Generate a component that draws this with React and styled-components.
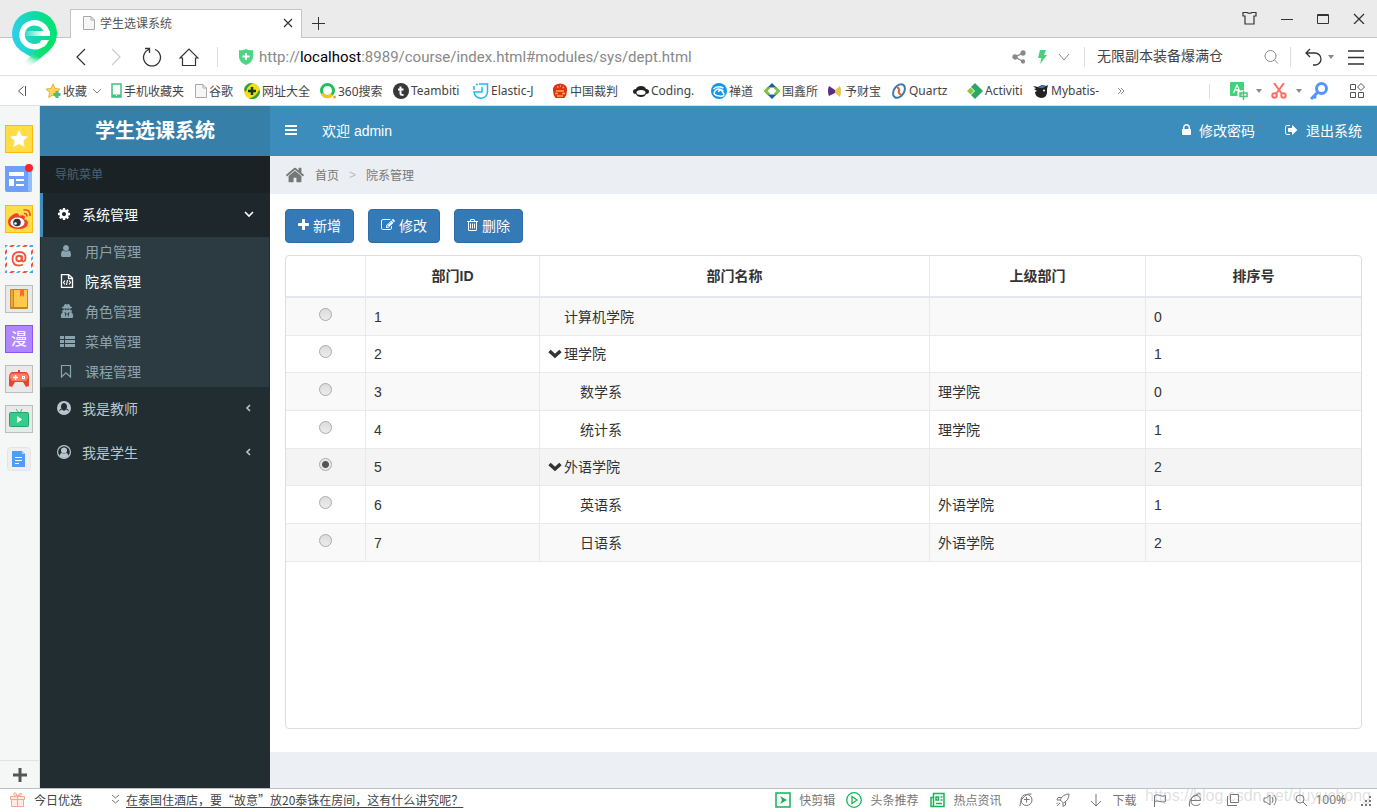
import React, { useState } from 'react';
import styled, { createGlobalStyle } from 'styled-components';
import { FaUserSecret } from 'react-icons/fa';

const GlobalStyle = createGlobalStyle`
  * {
    box-sizing: border-box;
  }
  body {
    margin: 0;
    background: #fff;
    color: #333;
    font-family: 'Liberation Sans', 'Noto Sans CJK SC', sans-serif;
    font-size: 14px;
  }
  button, input {
    font-family: inherit;
  }
  a {
    color: inherit;
    text-decoration: none;
  }
  svg {
    display: block;
    flex: none;
  }
`;

const Page = styled.div`
  display: flex;
  flex-direction: column;
  height: 100vh;
  overflow: hidden;
`;

/* ---------- browser window ---------- */

const Chrome = styled.header`
  position: relative;
  font-family: 'Noto Sans', 'Noto Sans CJK SC', sans-serif;
  font-size: 12px;
  color: #444;
`;

const BrowserLogo = styled.div`
  position: absolute;
  top: 10px;
  left: 11px;
`;

const TabBar = styled.div`
  display: flex;
  align-items: flex-end;
  height: 38px;
  padding-left: 70px;
  background: #ebebeb;
  border-bottom: 1px solid #c6c6c6;
`;

const Tab = styled.div`
  display: flex;
  align-items: center;
  gap: 5px;
  width: 232px;
  height: 29px;
  margin-bottom: -1px;
  padding: 0 8px 2px 12px;
  background: #fff;
  border: 1px solid #c6c6c6;
  border-bottom: none;
  color: #555;
`;

const TabTitle = styled.span`
  flex: 1;
`;

const IconButton = styled.button`
  display: flex;
  flex: none;
  align-items: center;
  justify-content: center;
  width: ${(props) => props.$w || 36}px;
  height: ${(props) => props.$h || 28}px;
  margin-left: ${(props) => props.$ml || 0}px;
  padding: 0;
  border: none;
  background: transparent;
  color: ${(props) => props.$color || '#333'};
  cursor: pointer;
`;

const WindowButtons = styled.div`
  display: flex;
  align-self: flex-start;
  margin-left: auto;
  padding-top: 5px;
`;

const AddressBar = styled.div`
  display: flex;
  align-items: center;
  height: 38px;
  padding-left: 63px;
  border-bottom: 1px solid #e0e0e0;
`;

const Divider = styled.span`
  flex: none;
  width: 1px;
  height: ${(props) => props.$h || 20}px;
  margin-left: ${(props) => props.$ml || 0}px;
  background: #ddd;
`;

const Url = styled.div`
  flex: 1;
  margin-left: 6px;
  outline: none;
  color: #888;
  font-family: Roboto, 'Noto Sans', sans-serif;
  font-size: 15px;
  line-height: 20px;
  white-space: nowrap;

  b {
    font-weight: 400;
    color: #000;
  }
`;

const SearchInput = styled.input`
  width: 167px;
  padding: 0 0 3px 12px;
  border: none;
  outline: none;
  background: transparent;
  color: #444;
  font-size: 14px;
`;

const BookmarkBar = styled.nav`
  display: flex;
  align-items: center;
  height: 30px;
  border-bottom: 1px solid #e0e0e0;
`;

const Bookmark = styled.a`
  display: flex;
  flex: none;
  align-items: center;
  gap: 2px;
  width: ${(props) => props.$w}px;
  color: #444;
  white-space: nowrap;
`;

const BookmarkTools = styled.div`
  display: flex;
  align-items: center;
  gap: 4px;
  margin-left: auto;
`;

const StatusTools = styled.div`
  display: flex;
  align-items: center;
  margin: 0 4px 0 auto;
`;

const Body = styled.div`
  display: flex;
  flex: 1;
  min-height: 0;
`;

const Rail = styled.aside`
  display: flex;
  flex: none;
  flex-direction: column;
  width: 40px;
  background: #f5f7f7;
  border-right: 1px solid #dde2e2;
`;

const RailList = styled.div`
  display: flex;
  flex: 1;
  flex-direction: column;
  gap: 12px;
  padding: 19px 0 0 5px;
`;

const RailAdd = styled.div`
  display: flex;
  justify-content: center;
  border-top: 1px solid #dfe3e8;
`;

const StatusBar = styled.footer`
  position: relative;
  display: flex;
  flex: none;
  align-items: center;
  height: 24px;
  padding-bottom: 2px;
  border-top: 1px solid #c0c0c0;
  background: #fff;
  color: #777;
  font-family: 'Noto Sans', 'Noto Sans CJK SC', sans-serif;
  font-size: 12px;
  white-space: nowrap;
`;

const StatusItem = styled.a`
  display: flex;
  align-items: center;
  gap: ${(props) => props.$gap || 8}px;
  margin-left: ${(props) => props.$ml || 0}px;
  color: ${(props) => props.$color || '#777'};
`;

const Headline = styled.a`
  margin-left: 6px;
  color: #444;
  font-family: 'Noto Sans CJK SC', sans-serif;
  text-decoration: underline;
  text-underline-offset: 2px;
`;

const Watermark = styled.span`
  position: absolute;
  right: 6px;
  bottom: 6px;
  color: rgba(150, 150, 150, 0.3);
  font-family: 'Liberation Sans', sans-serif;
  font-size: 16px;
  line-height: 20px;
  pointer-events: none;
`;

/* ---------- admin page ---------- */

const Sidebar = styled.aside`
  flex: none;
  width: 230px;
  background: #222d32;
`;

const Brand = styled.h1`
  margin: 0;
  height: 50px;
  background: #367fa9;
  color: #fff;
  font-size: 20px;
  line-height: 51px;
  text-align: center;
`;

const MenuHeader = styled.div`
  height: 37px;
  padding-left: 15px;
  background: #1a2226;
  color: #4b646f;
  font-size: 12px;
  line-height: 38px;
`;

const MenuItem = styled.a`
  display: flex;
  align-items: center;
  gap: 10px;
  height: 44px;
  padding: 0 16px 2px 13px;
  border-left: 3px solid ${(props) => (props.$active ? '#3c8dbc' : 'transparent')};
  background: ${(props) => (props.$active ? '#1e282c' : 'transparent')};
  color: ${(props) => (props.$active ? '#fff' : '#b8c7ce')};
`;

const MenuIcon = styled.span`
  display: flex;
  justify-content: center;
  width: 16px;
`;

const MenuLabel = styled.span`
  flex: 1;
`;

const SubMenu = styled.div`
  margin: 0 1px;
  background: #2c3b41;
`;

const SubItem = styled.a`
  display: flex;
  align-items: center;
  gap: 10px;
  height: 30px;
  padding: 0 0 2px 18px;
  color: ${(props) => (props.$active ? '#fff' : '#8aa4af')};
`;

const Main = styled.main`
  display: flex;
  flex: 1;
  flex-direction: column;
  min-width: 0;
  background: #ecf0f5;
`;

const Navbar = styled.nav`
  display: flex;
  align-items: center;
  height: 50px;
  padding: 0 15px 2px;
  background: #3c8dbc;
  color: #fff;
`;

const Welcome = styled.span`
  flex: 1;
  margin-left: 25px;
`;

const NavLink = styled.a`
  display: flex;
  align-items: center;
  gap: 8px;
  margin-left: 30px;
`;

const Breadcrumb = styled.div`
  display: flex;
  align-items: center;
  gap: 10px;
  height: 38px;
  padding: 0 0 1px 15px;
  background: #ebeef3;
  color: #777;
  font-size: 12px;
`;

const Arrow = styled.span`
  color: #bbb;
`;

const Panel = styled.section`
  display: flex;
  flex: 1;
  flex-direction: column;
  min-height: 0;
  margin-bottom: 36px;
  padding: 15px 15px 23px;
  background: #fff;
`;

const Toolbar = styled.div`
  display: flex;
  gap: 14px;
  margin-bottom: 12px;
`;

const Button = styled.button`
  display: flex;
  align-items: center;
  gap: 4px;
  height: 34px;
  padding: 0 12px 2px;
  border: 1px solid #2e6da4;
  border-radius: 4px;
  background: #337ab7;
  color: #fff;
  font-size: 14px;
  cursor: pointer;
`;

const TableBox = styled.div`
  flex: 1;
  overflow: hidden;
  border: 1px solid #ddd;
  border-radius: 4px;
`;

const Table = styled.table`
  width: 100%;
  table-layout: fixed;
  border-spacing: 0;
`;

const Col = styled.col`
  width: ${(props) => (props.$w ? `${props.$w}px` : 'auto')};
`;

const Th = styled.th`
  height: 42px;
  padding: 0 8px;
  border-bottom: 2px solid #e4e8ec;
  border-right: 1px solid #e7eaec;
  font-weight: 700;
  line-height: 20px;

  &:last-child {
    border-right: none;
  }
`;

const Row = styled.tr`
  height: ${(props) => (props.$parent ? 37 : 38)}px;
  background: ${(props) => (props.$selected ? '#f5f5f5' : 'transparent')};

  &:nth-child(odd) {
    background: ${(props) => (props.$selected ? '#f4f4f4' : '#f9f9f9')};
  }
`;

const Td = styled.td`
  padding: 0 8px;
  border-bottom: 1px solid #e7eaec;
  border-right: 1px solid #e7eaec;
  line-height: 20px;

  &:last-child {
    border-right: none;
  }
`;

const Radio = styled.input`
  display: block;
  width: 13px;
  height: 13px;
  margin: 0 auto 5px;
  appearance: none;
  border: 1px solid #aaa;
  border-radius: 50%;
  background: linear-gradient(#dcdcdc, #ececec);

  &:checked {
    background: radial-gradient(circle, #555 0 3px, #e8e8e8 4px);
  }
`;

const Name = styled.span`
  display: flex;
  align-items: center;
  gap: 2px;
  padding-left: ${(props) => props.$indent}px;
`;

/* ---------- icons ---------- */

// d, then the glyph's left edge and width on the 1792 grid
const FA = {
  plus: ['M1600 736v192q0 40-28 68t-68 28h-416v416q0 40-28 68t-68 28h-192q-40 0-68-28t-28-68v-416h-416q-40 0-68-28t-28-68v-192q0-40 28-68t68-28h416v-416q0-40 28-68t68-28h192q40 0 68 28t28 68v416h416q40 0 68 28t28 68z', 192, 1408],
  edit: ['M888 1184l116-116-152-152-116 116v56h96v96h56zm440-720q-16-16-33 1l-350 350q-17 17-1 33t33-1l350-350q17-17 1-33zm80 594v190q0 119-84.5 203.5t-203.5 84.5h-832q-119 0-203.5-84.5t-84.5-203.5v-832q0-119 84.5-203.5t203.5-84.5h832q63 0 117 25 15 7 18 23 3 17-9 29l-49 49q-14 14-32 8-23-6-45-6h-832q-66 0-113 47t-47 113v832q0 66 47 113t113 47h832q66 0 113-47t47-113v-126q0-13 9-22l64-64q15-15 35-7t20 29zm-96-738l288 288-672 672h-288v-288zm444 132l-92 92-288-288 92-92q28-28 68-28t68 28l152 152q28 28 28 68t-28 68z', 0, 1792],
  trash: ['M704 736v576q0 14-9 23t-23 9h-64q-14 0-23-9t-9-23v-576q0-14 9-23t23-9h64q14 0 23 9t9 23zm256 0v576q0 14-9 23t-23 9h-64q-14 0-23-9t-9-23v-576q0-14 9-23t23-9h64q14 0 23 9t9 23zm256 0v576q0 14-9 23t-23 9h-64q-14 0-23-9t-9-23v-576q0-14 9-23t23-9h64q14 0 23 9t9 23zm128 724v-948h-896v948q0 22 7 40.5t14.5 27 10.5 8.5h832q3 0 10.5-8.5t14.5-27 7-40.5zm-672-1076h448l-48-117q-7-9-17-11h-317q-10 2-17 11zm928 32v64q0 14-9 23t-23 9h-96v948q0 83-47 143.5t-113 60.5h-832q-66 0-113-58.5t-47-141.5v-952h-96q-14 0-23-9t-9-23v-64q0-14 9-23t23-9h309l70-167q15-37 54-63t79-26h320q40 0 79 26t54 63l70 167h309q14 0 23 9t9 23z', 192, 1408],
  signOut: ['M704 1440q0 4 1 20t.5 26.5-3 23.5-10 19.5-20.5 6.5h-320q-119 0-203.5-84.5t-84.5-203.5v-704q0-119 84.5-203.5t203.5-84.5h320q13 0 22.5 9.5t9.5 22.5q0 4 1 20t.5 26.5-3 23.5-10 19.5-20.5 6.5h-320q-66 0-113 47t-47 113v704q0 66 47 113t113 47h312l11.5 1 11.5 3 8 5.500 7 9 2 13.500zm928-544q0 26-19 45l-544 544q-19 19-45 19t-45-19-19-45v-288h-448q-26 0-45-19t-19-45v-384q0-26 19-45t45-19h448v-288q0-26 19-45t45-19 45 19l544 544q19 19 19 45z', 64, 1664],
  home: ['M1472 992v480q0 26-19 45t-45 19h-384v-384h-256v384h-384q-26 0-45-19t-19-45v-480q0-1 .5-3t.5-3l575-474 575 474q1 2 1 6zm223-69l-62 74q-8 9-21 11h-3q-13 0-21-7l-692-577-692 577q-12 8-24 7-13-2-21-11l-62-74q-8-10-7-23.5t11-21.5l719-599q32-26 76-26t76 26l244 204v-195q0-14 9-23t23-9h192q14 0 23 9t9 23v408l219 182q10 8 11 21.5t-7 23.5z', 0, 1792],
  cog: ['M1152 896q0-106-75-181t-181-75-181 75-75 181 75 181 181 75 181-75 75-181zm512-109v222q0 12-8 23t-20 13l-185 28q-19 54-39 91 35 50 107 138 10 12 10 25t-9 23q-27 37-99 108t-94 71q-12 0-26-9l-138-108q-44 23-91 38-16 136-29 186-7 28-36 28h-222q-14 0-24.5-8.5t-11.5-21.5l-28-184q-49-16-90-37l-141 107q-10 9-25 9-14 0-25-11-126-114-165-168-7-10-7-23 0-12 8-23 15-21 51-66.5t54-70.5q-27-50-41-99l-183-27q-13-2-21-12.5t-8-23.5v-222q0-12 8-23t19-13l186-28q14-46 39-92-40-57-107-138-10-12-10-24 0-10 9-23 26-36 98.5-107.5t94.5-71.5q13 0 26 10l138 107q44-23 91-38 16-136 29-186 7-28 36-28h222q14 0 24.5 8.5t11.5 21.5l28 184q49 16 90 37l142-107q9-9 24-9 13 0 25 10 129 119 165 170 7 8 7 22 0 12-8 23-15 21-51 66.5t-54 70.5q26 50 41 98l183 28q13 2 21 12.5t8 23.5z', 0, 1792],
  user: ['M1536 1399q0 109-62.5 187t-150.5 78h-854q-88 0-150.5-78t-62.5-187q0-85 8.500-160.500t31.500-152 58.500-131 94-89 134.500-34.500q131 128 313 128t313-128q76 0 134.500 34.500t94 89 58.500 131 31.500 152 8.500 160.500zm-256-887q0 159-112.500 271.500t-271.500 112.500-271.500-112.500-112.500-271.500 112.500-271.500 271.500-112.500 271.500 112.500 112.500 271.500z', 128, 1792],
  lock: ['M640 768h512v-192q0-106-75-181t-181-75-181 75-75 181v192zm832 96v576q0 40-28 68t-68 28h-960q-40 0-68-28t-28-68v-576q0-40 28-68t68-28h32v-192q0-184 132-316t316-132 316 132 132 316v192h32q40 0 68 28t28 68z', 320, 1152],
};

const FaIcon = ({ name, size = 14 }) => {
  const [d, x, w] = FA[name];
  return (
    <svg width={(size * w) / 1792} height={size} viewBox={`${x} 0 ${w} 1792`} fill="currentColor">
      <path d={d} />
    </svg>
  );
};

// thin outlined icons share this wrapper
const Line = ({ size = 16, w = 1, children }) => (
  <svg width={size} height={size} viewBox={`0 0 ${size} ${size}`} fill="none" stroke="currentColor" strokeWidth={w}>
    {children}
  </svg>
);

const Logo = () => (
  <svg width="47" height="58" viewBox="0 0 47 58">
    <defs>
      <linearGradient id="pin" x1="0" y1="0.6" x2="1" y2="0.4">
        <stop offset="0" stopColor="#2fd0f0" />
        <stop offset="0.5" stopColor="#14d9b0" />
        <stop offset="1" stopColor="#00e56b" />
      </linearGradient>
      <linearGradient id="tail" x1="1" y1="0" x2="0.1" y2="1">
        <stop offset="0" stopColor="#00e25a" />
        <stop offset="0.6" stopColor="#13e07a" />
        <stop offset="1" stopColor="#fff" stopOpacity="0" />
      </linearGradient>
      <linearGradient id="bar" x1="0" x2="1">
        <stop offset="0" stopColor="#fff" stopOpacity="0.1" />
        <stop offset="0.7" stopColor="#fff" />
      </linearGradient>
    </defs>
    <path d="M23.500 1A22.500 22.500 0 0 1 46 23.500Q46 31 40 38L24 49Q20 47 10 41Q1 34 1 23.500A22.500 22.500 0 0 1 23.500 1z" fill="url(#pin)" />
    <path d="M45 30Q43 36 38 41L20 56L10 55L26 40L38 30z" fill="url(#tail)" />
    <path d="M36 24A12.500 12 0 1 0 33.500 32" fill="none" stroke="#fff" strokeWidth="5.500" />
    <rect x="14" y="21" width="25" height="5" fill="url(#bar)" />
    <path d="M30 30H38Q36 34 33 37L29 33z" fill="#fff" />
  </svg>
);

const FileIcon = () => (
  <svg width="12" height="14" viewBox="0 0 12 14" fill="#f6f6f6" stroke="#aaa">
    <path d="M.5.500H8L11.500 4V13.500H.5zM8 .5V4H11.500" />
  </svg>
);

const Caret = () => (
  <svg width="6" height="4" viewBox="0 0 6 4" fill="#888"><path d="M0 0H6L3 4z" /></svg>
);

const Svg16 = ({ children }) => <svg width="16" height="16" viewBox="0 0 16 16">{children}</svg>;

const bookmarks = [
  {
    w: 66, text: '收藏', more: true,
    icon: (
      <Svg16>
        <path d="M8 1l2 4.500 5 .6-3.700 3.300 1 5L8 12l-4.400 2.400 1-5L1 6.100l5-.6z" fill="#ffd75a" stroke="#e8b23a" />
        <path d="M12 8v7M8.500 11.500h7" stroke="#3fc380" strokeWidth="3" />
      </Svg16>
    ),
  },
  {
    w: 84, text: '手机收藏夹',
    icon: (
      <svg width="11" height="15" viewBox="0 0 11 15">
        <rect x="1" y="1" width="9" height="13" fill="#fff" stroke="#3fc380" strokeWidth="1.500" />
        <path d="M1 11.500H10V14H1z" fill="#3fc380" /><path d="M5 12.500h1" stroke="#fff" />
      </svg>
    ),
  },
  { w: 49, text: '谷歌', icon: <FileIcon /> },
  {
    w: 76, text: '网址大全',
    icon: (
      <Svg16>
        <circle cx="8" cy="8" r="8" fill="#f5dc1e" />
        <path d="M0 7A8 8 0 0 1 9 0Q3 3 2 9zM16 8A8 8 0 0 1 5 15.500Q12 14 15 7z" fill="#2ba22e" />
        <path d="M8 4v8M4 8h8" stroke="#123c12" strokeWidth="2.500" />
      </Svg16>
    ),
  },
  {
    w: 73, text: '360搜索',
    icon: (
      <Svg16>
        <circle cx="7.500" cy="7.500" r="6" fill="none" stroke="#20bf5b" strokeWidth="3" />
        <path d="M2 10.500A6 6 0 0 0 12 11.500" fill="none" stroke="#f8c51c" strokeWidth="3" />
        <circle cx="14.500" cy="14" r="1.500" fill="#f8a51c" />
      </Svg16>
    ),
  },
  {
    w: 80, text: 'Teambiti',
    icon: (
      <Svg16>
        <circle cx="8" cy="8" r="8" fill="#383838" />
        <path d="M7.500 3.500V10.500Q7.500 12 10.500 12M5 6.500H10.500" fill="none" stroke="#fff" strokeWidth="2" />
      </Svg16>
    ),
  },
  {
    w: 79, text: 'Elastic-J',
    icon: (
      <Svg16>
        <path d="M6 1H14.500V8A6.500 6.500 0 0 1 1 9H9V4M1 7V3M3 1.500H5" fill="none" stroke="#23b8f0" strokeWidth="1.500" />
      </Svg16>
    ),
  },
  {
    w: 81, text: '中国裁判',
    icon: (
      <Svg16>
        <path d="M8 .5Q15.500 1 15 7.500Q15 12 12.500 15H3.500Q1 12 1 7.500Q.5 1 8 .5z" fill="#e0301e" />
        <path d="M5 4h1.500M8 3h1M10.500 4.500H12M4 8h8M3 10.500h3M10 10.500h3M5 13h6" stroke="#ffb23c" strokeWidth="1.300" />
      </Svg16>
    ),
  },
  {
    w: 78, text: 'Coding.',
    icon: (
      <Svg16>
        <path d="M3 6Q4 3 8 3t5 3q3 0 3 2.500T13 11q-1 3-5 3T3 11Q0 11 0 8.500T3 6z" fill="#222" />
        <ellipse cx="8" cy="9.500" rx="4.500" ry="2.500" fill="#fff" />
      </Svg16>
    ),
  },
  {
    w: 53, text: '禅道',
    icon: (
      <Svg16>
        <circle cx="8" cy="8" r="8" fill="#1296e8" />
        <path d="M2.500 6Q6 2 12.500 5M12.500 8Q7 4 4 8T8 13T12 9.500T7.500 9" fill="none" stroke="#fff" strokeWidth="1.500" />
      </Svg16>
    ),
  },
  {
    w: 63, text: '国鑫所',
    icon: (
      <Svg16>
        <path d="M5 4.500L1.500 8L5 11.500" fill="none" stroke="#7cc142" strokeWidth="3" />
        <path d="M11 4.500L14.500 8L11 11.500" fill="none" stroke="#7cc142" strokeWidth="3" />
        <path d="M8 0l4.500 4.500h-9zM8 16l-4.500-4.500h9z" fill="#1b5fa0" />
      </Svg16>
    ),
  },
  {
    w: 64, text: '予财宝',
    icon: (
      <Svg16>
        <path d="M2 3l6 4v3l-6 3q-2-5 0-10z" fill="#5b2d86" /><path d="M13 3L8 7v3l5 4q2-6 0-11z" fill="#e8c44a" />
      </Svg16>
    ),
  },
  {
    w: 76, text: 'Quartz',
    icon: (
      <Svg16>
        <ellipse cx="8" cy="8" rx="5" ry="7.500" transform="rotate(35 8 8)" fill="none" stroke="#3e7cb1" strokeWidth="2" />
        <path d="M6 4q3 2 2 4t2 4" fill="none" stroke="#e2622c" strokeWidth="2" />
      </Svg16>
    ),
  },
  {
    w: 66, text: 'Activiti',
    icon: (
      <Svg16>
        <path d="M8 0l8 8-8 8-4-4 4-4-4-4z" fill="#2aa862" /><path d="M3.500 4.500L7 8l-3.500 3.500L0 8z" fill="#8cc63f" />
      </Svg16>
    ),
  },
  {
    w: 84, text: 'Mybatis-',
    icon: (
      <Svg16>
        <path d="M0 3l5 1 4-2 4 1 2-1-1 4q1 9-6 9-6-1-6-6l2-1-3-2 2-.5z" fill="#222" />
        <path d="M5 5l5-3 3 1-3 2z" fill="#2d7fc4" /><circle cx="11" cy="7.500" r="1" fill="#fff" />
      </Svg16>
    ),
  },
];

// 28px launcher tiles on the left edge of the window
const Tile = ({ bg, edge, children }) => (
  <svg width="28" height="28" viewBox="0 0 28 28">
    <rect x=".5" y=".5" width="27" height="27" fill={bg} stroke={edge} />
    {children}
  </svg>
);

const ManText = styled.span`
  display: flex;
  align-items: center;
  justify-content: center;
  width: 28px;
  height: 28px;
  padding-bottom: 2px;
  border: 1px solid #8e52f5;
  background: #b087ff;
  color: #fff;
  font-size: 16px;
`;

const railTiles = [
  {
    label: '收藏',
    art: (
      <Tile bg="#ffdd45" edge="#fcb913">
        <path d="M14 5l2.700 5.700 6.300.8-4.600 4.300 1.200 6.200-5.600-3-5.600 3 1.200-6.200L5 11.500l6.300-.8z" fill="#fff" />
      </Tile>
    ),
  },
  {
    label: '新闻',
    art: (
      <svg width="28" height="28" viewBox="0 0 28 28" overflow="visible">
        <path d="M0 1H25Q27 1 27 3V25Q27 27 25 27H2Q0 27 0 25z" fill="#6e9ffb" />
        <path d="M23 3h4v22q0 2-2 2t-2-2z" fill="#8fbdff" />
        <path d="M4 7H19V11H4zM4 14H9V21H4zM11 14H19V16H11zM11 19H19V21H11z" fill="#fff" />
        <circle cx="24" cy="3" r="4" fill="#ff2424" />
      </svg>
    ),
  },
  {
    label: '微博',
    art: (
      <Tile bg="#ffdc48" edge="#fcb913">
        <path d="M3 17q0-5 6-8 5-2 5 2 6-2 6 2l-1 1q4 1 4 4 0 6-10 6T3 17z" fill="#e8452f" />
        <ellipse cx="12.500" cy="17.500" rx="7" ry="5" fill="#fff" /><circle cx="12" cy="17.500" r="3.800" fill="#333" />
        <circle cx="10.500" cy="18.500" r="1.300" fill="#fff" />
        <path d="M18.500 5q7-1 6.500 6M19 8.500q3-.5 3 3" fill="none" stroke="#e8452f" strokeWidth="1.500" />
      </Tile>
    ),
  },
  {
    label: '邮箱',
    art: (
      <svg width="28" height="28" viewBox="0 0 28 28">
        <rect width="28" height="28" fill="#fff" />
        <path d="M6 0H10L8 2H4zM19 0H23L21 2H17zM0 6L2 4V8L0 10zM0 19L2 17V21L0 23zM26 6L28 4V8L26 10zM26 19L28 17V21L26 23zM6 26H10L8 28H4zM19 26H23L21 28H17z" fill="#f0563f" />
        <path d="M0 0H3L0 3zM13 0H16L14 2H11zM25 0H28V2H24zM0 13L2 11V14L0 16zM26 13L28 11V14L26 16zM0 26L2 25V28H0zM13 26H16L14 28H11zM26 26L28 25V28H24z" fill="#4aa8f0" />
        <circle cx="14" cy="13.500" r="2.700" fill="none" stroke="#f0563f" strokeWidth="2" />
        <path d="M17 10.500V15q0 2 1.500 1.500Q20.500 16 20.500 13 20.500 7 14.500 7 7.500 7 7.500 14 7.500 20.500 14 20.500q2 0 4-1" fill="none" stroke="#f0563f" strokeWidth="1.800" />
      </svg>
    ),
  },
  {
    label: '小说',
    art: (
      <Tile bg="#e9e9e9" edge="#bdbdbd">
        <rect x="5" y="4" width="18" height="20" rx="1" fill="#c98322" /><path d="M9 5H22V22H9z" fill="#ffc94f" />
        <path d="M6 5h2v17H6z" fill="#e9a93a" />
        <path d="M15 5h4v7l-2-2-2 2z" fill="#ff6534" />
      </Tile>
    ),
  },
  { label: '漫画', art: <ManText>漫</ManText> },
  {
    label: '游戏',
    art: (
      <Tile bg="#e9e9e9" edge="#bdbdbd">
        <path d="M14 5v3" stroke="#e8452f" strokeWidth="2" />
        <path d="M7 7H21Q24 8 24 13V21L21 22L18 17H10L7 22L4 21V13Q4 8 7 7z" fill="#e8452f" />
        <path d="M7 8.500H21Q23 9 23 13L21 16H7L5 13Q5 9 7 8.500z" fill="#ff7d63" />
        <path d="M8 12.500h5M10.500 10v5" stroke="#fff" strokeWidth="1.500" /><rect x="17.500" y="11.500" width="2" height="2" fill="none" stroke="#fff" />
      </Tile>
    ),
  },
  {
    label: '视频',
    art: (
      <Tile bg="#e9e9e9" edge="#bdbdbd">
        <path d="M11 4l3 4M17 4l-2 4" stroke="#2bbf7f" strokeWidth="1" />
        <rect x="4.500" y="7.500" width="19" height="14" rx="1" fill="#34cc8b" stroke="#1ea86c" />
        <path d="M12 11l5 3.500-5 3.500z" fill="#fff" />
      </Tile>
    ),
  },
  {
    label: '文档',
    art: (
      <svg width="28" height="28" viewBox="0 0 28 28">
        <rect x="2.500" y="2.500" width="23" height="23" rx="3" fill="#efefef" stroke="#e4e4e4" />
        <path d="M7 6H17L20 9V22H7z" fill="#4f9df5" /><path d="M17 6v3h3z" fill="#a8d0ff" />
        <path d="M10 12.500h7M10 15.500h7M10 18.500h4" stroke="#fff" strokeWidth="1" />
      </svg>
    ),
  },
];

const subMenu = [
  { text: '用户管理', icon: <FaIcon name="user" /> },
  {
    text: '院系管理', active: true,
    icon: (
      <svg width="14" height="14" viewBox="0 0 14 14" fill="none" stroke="currentColor">
        <path d="M1.500.500H8.500L12.500 4V13.500H1.500zM8.500.500V4.500H12.500" strokeWidth="1.300" />
        <path d="M5 6.500L3.500 8.500L5 10.500M9 6.500l1.500 2L9 10.500M7.500 6l-1 5" strokeWidth="1.200" />
      </svg>
    ),
  },
  { text: '角色管理', icon: <FaUserSecret size={14} /> },
  {
    text: '菜单管理',
    icon: (
      <svg width="16" height="14" viewBox="0 0 16 14" fill="currentColor">
        <path d="M1 2h4v3H1zM6 2h10v3H6zM1 6h4v3H1zM6 6h10v3H6zM1 10h4v3H1zM6 10h10v3H6z" />
      </svg>
    ),
  },
  {
    text: '课程管理',
    icon: (
      <svg width="14" height="14" viewBox="0 0 14 14" fill="none" stroke="currentColor" strokeWidth="1.200">
        <path d="M1.500 1.500H10.500V13L6 8.800L1.500 13z" />
      </svg>
    ),
  },
];

const TeacherIcon = () => (
  <svg width="14" height="14" viewBox="0 0 14 14">
    <circle cx="7" cy="7" r="7" fill="currentColor" />
    <path d="M7 2A3.200 3.500 0 0 1 9.500 7.500Q11.500 8 12 10.500Q10.500 9 9 8.500L7 10L5 8.500Q3.500 9 2 10.500Q2.500 8 4.500 7.500A3.200 3.500 0 0 1 7 2z" fill="#222d32" />
  </svg>
);

const StudentIcon = () => (
  <svg width="14" height="14" viewBox="0 0 14 14">
    <circle cx="7" cy="7" r="6.400" fill="none" stroke="currentColor" strokeWidth="1.200" />
    <circle cx="7" cy="5.500" r="3" fill="currentColor" />
    <path d="M2.500 11Q3 8 5 8q2 1.500 4 0 2 0 2.500 3-2 2-4.500 2t-4.500-2z" fill="currentColor" />
  </svg>
);

const Chevron = ({ down }) => (
  <svg width="10" height="10" viewBox="0 0 10 10" fill="none" stroke="currentColor" strokeWidth="1.600">
    <path d={down ? 'M1 3L5 7L9 3' : 'M6 2L3 5L6 8'} />
  </svg>
);

const depts = [
  { id: 1, name: '计算机学院', parent: '', order: 0, level: 1 },
  { id: 2, name: '理学院', parent: '', order: 1, open: true },
  { id: 3, name: '数学系', parent: '理学院', order: 0, level: 2 },
  { id: 4, name: '统计系', parent: '理学院', order: 1, level: 2 },
  { id: 5, name: '外语学院', parent: '', order: 2, open: true },
  { id: 6, name: '英语系', parent: '外语学院', order: 1, level: 2 },
  { id: 7, name: '日语系', parent: '外语学院', order: 2, level: 2 },
];

const BrowserTop = () => (
  <Chrome>
    <TabBar>
      <Tab>
        <FileIcon />
        <TabTitle>学生选课系统</TabTitle>
        <IconButton $w={10} aria-label="关闭标签">
          <Line size={10} w={1.2}><path d="M1 1L9 9M9 1L1 9" /></Line>
        </IconButton>
      </Tab>
      <IconButton $w={32} aria-label="新标签">
        <Line size={14}><path d="M7.500 1V14M1 7.500H14" /></Line>
      </IconButton>
      <WindowButtons>
        <IconButton $w={38} $h={26} aria-label="皮肤">
          <Line size={16} w={1.2}><path d="M5 2.500Q7.500 4 10 2.500H14V6H12V14H3V6H1V2.500z" /></Line>
        </IconButton>
        <IconButton $h={26} aria-label="最小化"><Line size={12}><path d="M0 7.500H12" /></Line></IconButton>
        <IconButton $h={26} aria-label="最大化"><Line size={12}><path d="M.5 2.500H11.500V11.500H.5zM.5 3.500H11.500" /></Line></IconButton>
        <IconButton $h={26} aria-label="关闭"><Line size={12} w={1.3}><path d="M1 2L11 12M11 2L1 12" /></Line></IconButton>
      </WindowButtons>
    </TabBar>
    <AddressBar>
      <IconButton aria-label="后退"><Line size={18} w={1.2}><path d="M13 1L5 9L13 17" /></Line></IconButton>
      <IconButton $w={34} $color="#ccc" aria-label="前进"><Line size={18} w={1.2}><path d="M5 1L13 9L5 17" /></Line></IconButton>
      <IconButton $w={38} aria-label="刷新">
        <Line size={20} w={1.3}><path d="M13 2.500A8.500 8.500 0 1 1 7 2.500M3 1.500H7.500V6" /></Line>
      </IconButton>
      <IconButton $w={36} aria-label="主页">
        <Line size={20} w={1.2}><path d="M1 11L10 2L19 11H16.500V18.500H3.500V11z" /></Line>
      </IconButton>
      <Divider $ml={10} />
      <IconButton $w={35} aria-label="网站安全">
        <svg width="35" height="16" viewBox="0 0 35 16">
          <path d="M21 1q3.500 1 7-1 3.500 2 7 1v7q0 5-7 8-7-3-7-8z" fill="#4cd582" />
          <path d="M28 4v7M24.500 7.500h7" stroke="#fff" strokeWidth="2" />
        </svg>
      </IconButton>
      <Url role="textbox" aria-label="地址" contentEditable suppressContentEditableWarning>
        http://<b>localhost</b>:8989/course/index.html#modules/sys/dept.html
      </Url>
      <IconButton $w={24} $color="#888" aria-label="分享">
        <Line size={14} w={1.3}>
          <path d="M3 7L11 3M3 7L11 11.500" />
          <g fill="currentColor"><circle cx="3" cy="7" r="2" /><circle cx="11" cy="3" r="2" /><circle cx="11" cy="11.500" r="1.500" /></g>
        </Line>
      </IconButton>
      <IconButton $w={22} $color="#43d17a" aria-label="加速">
        <svg width="10" height="14" viewBox="0 0 10 14" fill="currentColor"><path d="M3 0H9L7 5H10L3 14L4.500 8H1z" /></svg>
      </IconButton>
      <IconButton $w={22} $color="#888" aria-label="展开">
        <Line size={12}><path d="M1 3L6 9L11 3" /></Line>
      </IconButton>
      <Divider $ml={9} />
      <SearchInput aria-label="搜索" defaultValue="无限副本装备爆满仓" />
      <IconButton $w={38} $color="#888" aria-label="搜索按钮">
        <Line size={16}><circle cx="7.500" cy="7" r="5.500" /><path d="M11.500 11L15 14.500" /></Line>
      </IconButton>
      <Divider />
      <IconButton $ml={7} $w={30} aria-label="恢复">
        <Line size={18} w={1.3}><path d="M6 1L2 5L6 9M2 5H11A6 6 0 0 1 11 17H9" /></Line>
      </IconButton>
      <Caret />
      <IconButton $w={43} aria-label="菜单">
        <Line size={16} w={1.3}><path d="M0 2H16M0 8.500H16M0 15H16" /></Line>
      </IconButton>
    </AddressBar>
    <BookmarkBar>
      <IconButton $w={45} $color="#555" aria-label="收起">
        <Line size={12}><path d="M6.500 1.500L1.500 6L6.500 10.500M8.500 1V11" /></Line>
      </IconButton>
      {bookmarks.map((item) => (
        <Bookmark key={item.text} href="#" $w={item.w}>
          {item.icon}
          <span>{item.text}</span>
          {item.more && (
            <IconButton as="span" $w={16} $color="#888"><Line size={8}><path d="M0 2L4 6L8 2" /></Line></IconButton>
          )}
        </Bookmark>
      ))}
      <IconButton $w={8} $color="#888" aria-label="更多">
        <Line size={8}><path d="M1 1L4 4L1 7M4 1L7 4L4 7" /></Line>
      </IconButton>
      <BookmarkTools>
        <Divider $h={14} />
        <IconButton $ml={12} $w={26} $h={20} $color="#43c97a" aria-label="翻译">
          <svg width="18" height="18" viewBox="0 0 18 18">
            <rect x="0" y="0" width="14" height="14" rx="1" fill="#43d17a" />
            <path d="M3.500 11L7 3L10.500 11M5 8H9" fill="none" stroke="#fff" strokeWidth="1.300" />
            <path d="M9 10H18V15H9zM13.500 8V18" fill="none" stroke="#fff" strokeWidth="3" />
            <path d="M10 11H17V14.500H10zM13.500 8.500V18" fill="none" stroke="#43c97a" strokeWidth="1.500" />
          </svg>
        </IconButton>
        <Caret />
        <IconButton $w={26} $h={20} $color="#ff6e63" aria-label="截图">
          <Line size={16} w={2}>
            <path d="M3 0L11 11M13 0L5 11" /><circle cx="3.500" cy="12.500" r="2.200" /><circle cx="12.500" cy="12.500" r="2.200" />
          </Line>
        </IconButton>
        <Caret />
        <IconButton $w={26} $h={20} $color="#5593ff" aria-label="密码">
          <Line size={18} w={3}><circle cx="11.500" cy="6.500" r="5" /><path d="M8 10L1 17M3 14L6 16" /></Line>
        </IconButton>
        <IconButton $w={41} $h={20} $color="#555" aria-label="扩展">
          <Line size={16}>
            <path d="M1.500 1.500H6.500V6.500H1.500zM1.500 9.500H6.500V14.500H1.500zM9.500 9.500H14.500V14.500H9.500zM12 .5L15.500 4L12 7.500L8.500 4z" />
          </Line>
        </IconButton>
      </BookmarkTools>
    </BookmarkBar>
    <BrowserLogo><Logo /></BrowserLogo>
  </Chrome>
);

const BrowserBottom = () => (
  <StatusBar>
    <StatusItem href="#" $ml={10} $gap={9} $color="#444">
      <svg width="15" height="15" viewBox="0 0 15 15" fill="#fdebe4" stroke="#f3a78e">
        <path d="M.5 4.500H14.500V7.500H.5zM1.500 7.500H13.500V14.500H1.500zM7.500 4.500V14.500M7.500 4Q3 4 4 1.500T7.500 4Q10 0 11.500 1.500T7.500 4" />
      </svg>
      今日优选
    </StatusItem>
    <StatusItem as="span" $ml={29}>
      <Line size={9}><path d="M1 0L4.500 3L8 0M1 5L4.500 8L8 5" /></Line>
    </StatusItem>
    <Headline href="#">在泰国住酒店，要“故意”放20泰铢在房间，这有什么讲究呢？</Headline>
    <StatusTools>
      <StatusItem href="#">
        <svg width="16" height="16" viewBox="0 0 16 16" fill="none" stroke="#14b45a" strokeWidth="1.500">
          <rect x="1" y="1" width="14" height="14" /><path d="M5 4l7 4-7 4 2-4z" fill="#14b45a" stroke="none" />
        </svg>
        快剪辑
      </StatusItem>
      <StatusItem href="#" $ml={11}>
        <svg width="16" height="16" viewBox="0 0 16 16" fill="none" stroke="#14b45a" strokeWidth="1.300">
          <circle cx="8" cy="8" r="7.300" /><path d="M6 4.500V11.500L11 8z" />
        </svg>
        头条推荐
      </StatusItem>
      <StatusItem href="#" $ml={12}>
        <svg width="15" height="16" viewBox="0 0 15 16" fill="none" stroke="#14b45a" strokeWidth="1.500">
          <path d="M3.500 1.500H14V14.500H1V5.500H3.500zM3.500 5V14M6 5H8.500V8H6zM10.500 5h2M10.500 8h2M6 11.500H12" />
        </svg>
        热点资讯
      </StatusItem>
      <IconButton $w={50} $h={20} $color="#777" aria-label="加速球">
        <Line size={14}><circle cx="7.500" cy="7" r="5.500" /><path d="M1 13Q1 5 9 1H12.500M7.500 4V9.500M5 6.500H10.500" /></Line>
      </IconButton>
      <IconButton $w={24} $h={20} $color="#777" aria-label="清理">
        <Line size={14}><path d="M13 1Q7 1 4 7L7.500 10Q13 7 13 1zM5.500 4.500H2L1 7H4M9.500 9V12L7 13.500V10M4 10L1 13M2 9.500L.5 11" /></Line>
      </IconButton>
      <StatusItem href="#" $ml={14} $gap={9}>
        <Line size={14}><path d="M7 1V13M2 8L7 13L12 8" /></Line>
        下载
      </StatusItem>
      <IconButton $w={48} $h={20} $color="#777" aria-label="举报">
        <Line size={14}><path d="M1.500 14V2.500Q4 1 7 2.500T12.500 2.500V8.500Q10 9.500 7 8.500T1.500 8.500" /></Line>
      </IconButton>
      <IconButton $w={22} $h={20} $color="#777" aria-label="浏览模式">
        <Line size={14}><path d="M3 7.500H12.500Q12.500 2.500 8 2.500T3 7.500Q3 12.500 7.500 12.500T12 10.500M1.500 13.500Q0 6 8 2Q11 0 12.500 1" /></Line>
      </IconButton>
      <IconButton $w={54} $h={20} $color="#777" aria-label="小窗">
        <Line size={14}><path d="M4.500 1.500H12.500V9.500H4.500zM1.500 3V12.500H11" /></Line>
      </IconButton>
      <IconButton $w={20} $h={20} $color="#777" aria-label="声音">
        <Line size={14}><path d="M1 5H3L7 2V12L3 9H1zM9 4Q11 7 9 10M11 2Q15 7 11 12" /></Line>
      </IconButton>
      <StatusItem href="#" $ml={14} $gap={7}>
        <Line size={14}><circle cx="6" cy="6" r="4" /><path d="M9 9L13 13" /></Line>
        100%
      </StatusItem>
      <StatusItem as="span" $ml={15}>
        <svg width="12" height="12" viewBox="0 0 12 12" fill="#777">
          <path d="M8 2h2v2H8zM4 6h2v2H4zM8 6h2v2H8zM0 10h2v2H0zM4 10h2v2H4zM8 10h2v2H8z" />
        </svg>
      </StatusItem>
    </StatusTools>
    <Watermark>https://blog.csdn.net/duyuchong</Watermark>
  </StatusBar>
);

const App = () => {
  const [selected, setSelected] = useState(5);

  return (
    <Page>
      <GlobalStyle />
      <BrowserTop />
      <Body>
        <Rail>
          <RailList>
            {railTiles.map((tile) => (
              <IconButton key={tile.label} $w={28} $h={28} aria-label={tile.label}>{tile.art}</IconButton>
            ))}
          </RailList>
          <RailAdd>
            <IconButton $w={28} $h={27} $color="#555" aria-label="添加">
              <Line size={14} w={3}><path d="M7 0V14M0 7H14" /></Line>
            </IconButton>
          </RailAdd>
        </Rail>
        <Sidebar>
          <Brand>学生选课系统</Brand>
          <MenuHeader>导航菜单</MenuHeader>
          <MenuItem href="#" $active>
            <MenuIcon><FaIcon name="cog" /></MenuIcon>
            <MenuLabel>系统管理</MenuLabel>
            <Chevron down />
          </MenuItem>
          <SubMenu>
            {subMenu.map((item) => (
              <SubItem key={item.text} href="#" $active={item.active}>
                <MenuIcon>{item.icon}</MenuIcon>
                {item.text}
              </SubItem>
            ))}
          </SubMenu>
          <MenuItem href="#">
            <MenuIcon><TeacherIcon /></MenuIcon>
            <MenuLabel>我是教师</MenuLabel>
            <Chevron />
          </MenuItem>
          <MenuItem href="#">
            <MenuIcon><StudentIcon /></MenuIcon>
            <MenuLabel>我是学生</MenuLabel>
            <Chevron />
          </MenuItem>
        </Sidebar>
        <Main>
          <Navbar>
            <IconButton $w={12} $color="#fff" aria-label="切换菜单">
              <Line size={12} w={2}><path d="M0 2H12M0 6H12M0 10H12" /></Line>
            </IconButton>
            <Welcome>欢迎 admin</Welcome>
            <NavLink href="#"><FaIcon name="lock" />修改密码</NavLink>
            <NavLink href="#"><FaIcon name="signOut" />退出系统</NavLink>
          </Navbar>
          <Breadcrumb>
            <FaIcon name="home" size={20} />
            <a href="#">首页</a>
            <Arrow>&gt;</Arrow>
            <span>院系管理</span>
          </Breadcrumb>
          <Panel>
            <Toolbar>
              <Button><FaIcon name="plus" />新增</Button>
              <Button><FaIcon name="edit" />修改</Button>
              <Button><FaIcon name="trash" />删除</Button>
            </Toolbar>
            <TableBox>
              <Table>
                <colgroup>
                  <Col $w={80} />
                  <Col $w={174} />
                  <Col />
                  <Col $w={216} />
                  <Col $w={215} />
                </colgroup>
                <thead>
                  <tr>
                    <Th aria-label="选择" />
                    <Th>部门ID</Th>
                    <Th>部门名称</Th>
                    <Th>上级部门</Th>
                    <Th>排序号</Th>
                  </tr>
                </thead>
                <tbody>
                  {depts.map((dept) => (
                    <Row key={dept.id} $parent={dept.open} $selected={selected === dept.id}>
                      <Td>
                        <Radio
                          type="radio"
                          name="dept"
                          aria-label={dept.name}
                          checked={selected === dept.id}
                          onChange={() => setSelected(dept.id)}
                        />
                      </Td>
                      <Td>{dept.id}</Td>
                      <Td>
                        <Name $indent={(dept.level || 0) * 16}>
                          {dept.open && (
                            <svg width="14" height="14" viewBox="0 0 14 14" fill="none" stroke="#333" strokeWidth="3.500">
                              <path d="M1.500 4L7 9L12.500 4" />
                            </svg>
                          )}
                          {dept.name}
                        </Name>
                      </Td>
                      <Td>{dept.parent}</Td>
                      <Td>{dept.order}</Td>
                    </Row>
                  ))}
                </tbody>
              </Table>
            </TableBox>
          </Panel>
        </Main>
      </Body>
      <BrowserBottom />
    </Page>
  );
};

export default App;
